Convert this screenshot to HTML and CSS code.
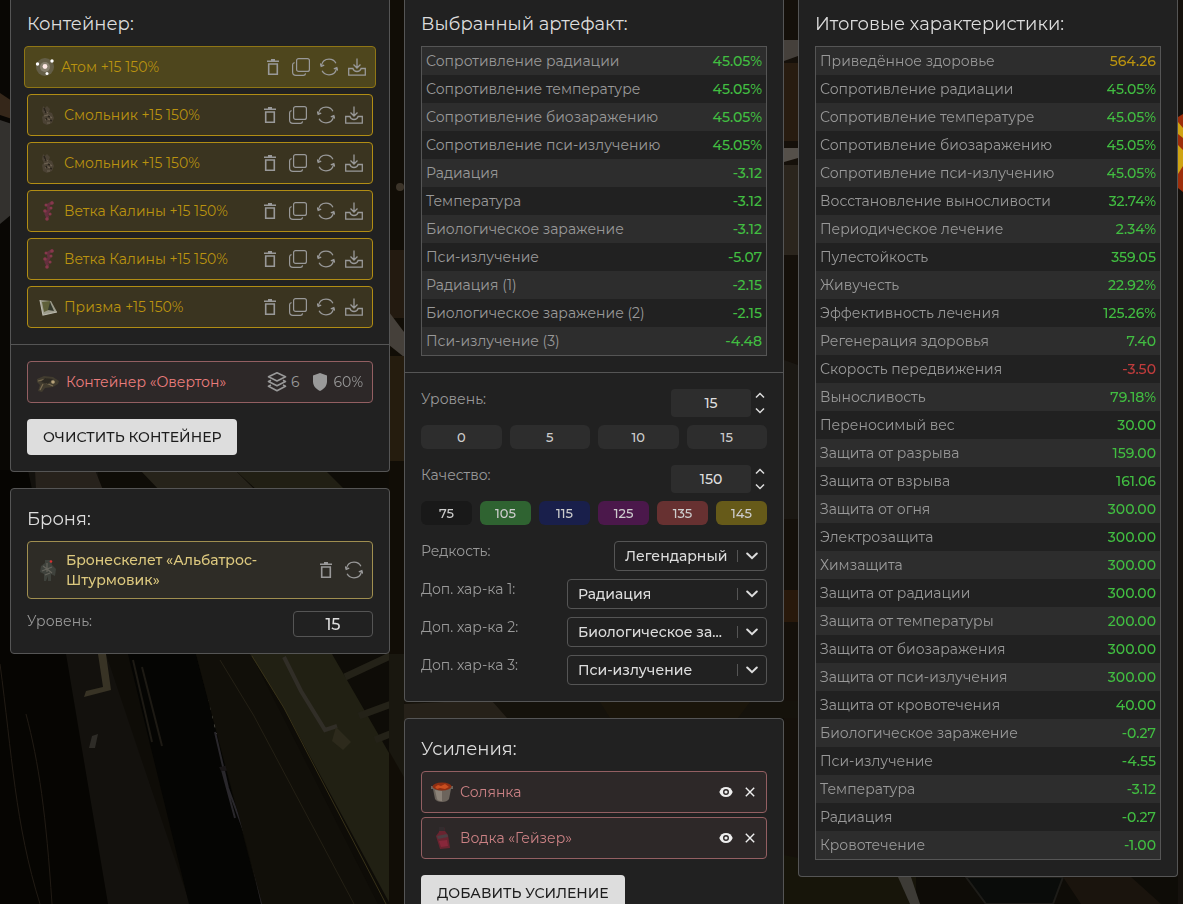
FILE: index.html
```html
<!DOCTYPE html>
<html lang="ru">
<head>
<meta charset="utf-8">
<meta name="viewport" content="width=device-width, initial-scale=1">
<title>Сборка артефактов</title>
<link rel="stylesheet" href="styles.css">
</head>
<body>
<svg class="defs" aria-hidden="true">
  <symbol id="trash" viewBox="0 0 18 18"><path d="M3 3.2h12M7 1.800h4M4.700 6v10.200h8.600V6z" fill="none" stroke="currentColor" stroke-width="1.600"/></symbol>
  <symbol id="copy" viewBox="0 0 18 18"><rect x="4.600" y=".6" width="12.800" height="12.800" rx="2" fill="none" stroke="currentColor" stroke-width="1.200"/><path d="M2.600 4.600C1.200 4.800.6 5.600.6 6.800V14c0 2.200 1.200 3.400 3.400 3.400h7.400c1.200 0 2-.6 2.200-2" fill="none" stroke="currentColor" stroke-width="1.200"/></symbol>
  <symbol id="refresh" viewBox="0 0 18 18"><path d="M1.400 7.600C2.200 3.800 5.200 1.200 9 1.200c3 0 5.600 1.500 6.900 4M16.600 10.400C15.800 14.200 12.800 16.800 9 16.800c-3 0-5.600-1.500-6.900-4" fill="none" stroke="currentColor" stroke-width="1.300"/><path d="M.3 5.400l.9 3 3-1.200M17.700 12.600l-.9-3-3 1.200" fill="none" stroke="currentColor" stroke-width="1.300"/></symbol>
  <symbol id="download" viewBox="0 0 18 18"><path d="M9 .5v9.300M5.500 6.500L9 10l3.500-3.500M.7 10.500h4.200c.6 1.900 2 3 4.100 3s3.500-1.100 4.100-3h4.200v6.700H.7z" fill="none" stroke="currentColor" stroke-width="1.300"/></symbol>
  <symbol id="layers" viewBox="0 0 20 20"><path d="M10 .8l8.500 4L10 9 1.500 4.800zM4 8.300L1.500 9.500 10 13.800l8.500-4.300L16 8.300M4 13l-2.500 1.300L10 18.800l8.500-4.500L16 13" fill="none" stroke="currentColor" stroke-width="1.600" stroke-linejoin="round"/></symbol>
  <symbol id="shield" viewBox="0 0 16 20"><path d="M8 1l7 2.500v6C15 14 12 17 8 19 4 17 1 14 1 9.500v-6z" fill="currentColor"/></symbol>
  <symbol id="eye" viewBox="0 0 14 12"><path d="M7 1C3.800 1 1.300 2.900.3 6c1 3.100 3.500 5 6.700 5s5.700-1.900 6.700-5C12.700 2.900 10.200 1 7 1z" fill="currentColor"/><circle cx="7" cy="6" r="2.300" fill="#eee" stroke="#2d2828" stroke-width="1.400"/></symbol>
  <symbol id="cross" viewBox="0 0 10 10"><path d="M.8.8l8.400 8.400M9.200.8L.8 9.200" fill="none" stroke="currentColor" stroke-width="1.400"/></symbol>
  <symbol id="up" viewBox="0 0 10 6"><path d="M1 5l4-4 4 4" fill="none" stroke="currentColor" stroke-width="1.500"/></symbol>
  <symbol id="down" viewBox="0 0 10 6"><path d="M1 1l4 4 4-4" fill="none" stroke="currentColor" stroke-width="1.500"/></symbol>
  <symbol id="arrow" viewBox="0 0 12 8"><path d="M1.200 1.500L6 6.200l4.800-4.700" fill="none" stroke="currentColor" stroke-width="2" stroke-linecap="round"/></symbol>
  <symbol id="atom" viewBox="0 0 24 24"><circle cx="12" cy="12" r="9" fill="#77736a" opacity=".55"/><circle cx="12" cy="12" r="5" fill="#a9a195" opacity=".5"/><circle cx="12" cy="11.500" r="2.400" fill="#ffe9e6"/><circle cx="4.500" cy="9" r="1.700" fill="#fff"/><circle cx="19" cy="6" r="1.700" fill="#fff"/><circle cx="14" cy="18.500" r="1.500" fill="#fff"/></symbol>
  <symbol id="resin" viewBox="0 0 24 24"><path d="M7 3l2 2 2-2 3 3-1 3 3 1 2 5-2 5-5 2-4-2-1-6 2-2-2-4z" fill="#4b4234"/><path d="M8 8l4 2M8 13l4-1 4 3M9 17l3-1 4 2M11 20h3" fill="none" stroke="#6d6252" stroke-width="1.200"/><path d="M8 5l2 5M12 13l2 1M10 15l1 2M14 17l2 1" stroke="#2a241c" stroke-width="1.500"/></symbol>
  <symbol id="branch" viewBox="0 0 24 24"><path d="M17 3l-5 3 1 5-3 4 2 4" fill="none" stroke="#642f3e" stroke-width="3"/><g fill="#87384c"><circle cx="16" cy="4" r="1.800"/><circle cx="10" cy="6" r="1.500"/><circle cx="15" cy="9" r="1.500"/><circle cx="9" cy="12" r="1.800"/><circle cx="14" cy="15" r="1.600"/><circle cx="11" cy="20" r="1.800"/></g></symbol>
  <symbol id="prism" viewBox="0 0 24 24"><path d="M4 5l11 1 6 11-14 3z" fill="#9c9b8b"/><path d="M6 7l8-1 1 8-7 3z" fill="#5f603a"/><path d="M12 15l2-8 4 9z" fill="#34382b"/><path d="M4 5l3 15 14-3" fill="none" stroke="#bab9ad" stroke-width="1.200"/></symbol>
  <symbol id="pouch" viewBox="0 0 24 24"><path d="M1 9l7-3 9 1 6 4-1 3-5 3-8 1-3 4-4-1 2-6-3-3z" fill="#423c2f"/><path d="M2 11l8-2 6 2M7 14l-3 6M10 13l7 3" stroke="#7b6d52" stroke-width="1.200" fill="none"/><path d="M9 8l8 1-5 5-7-2z" fill="#2d2922"/><circle cx="17" cy="12" r="1.800" fill="#b9a47c"/></symbol>
  <symbol id="armor" viewBox="0 0 24 24"><path d="M9 2h6l1 5 4 4-1 7-4-2v7h-3v-5l-2 5H8v-7l-4-2 1-6 4-3z" fill="#3f423c"/><path d="M7 8l4 3 5-2M6 13l5-2 5 4M9 17l5-2M11 5v9" stroke="#65645c" stroke-width="1.200" fill="none"/><circle cx="15" cy="3.500" r="1.300" fill="#d93131"/></symbol>
  <symbol id="pot" viewBox="0 0 24 24"><path d="M1 6h22v3h-2l-2 10c-2 4-12 4-14 0L3 9H1z" fill="#6c645c"/><path d="M5 10l2 9c1 2 3 2 5 2V11z" fill="#8b8278"/><ellipse cx="12" cy="6.500" rx="9.500" ry="4" fill="#8d2e12"/><path d="M5 7l3-2 3 1 4-2 4 3-4 2-5-1-3 1z" fill="#c94e1f"/></symbol>
  <symbol id="bottle" viewBox="0 0 24 24"><path d="M9 1h5l1 4 3 4 2 13-10 1L6 10l3-4z" fill="#6a2430"/><path d="M9 1h5l1 4H9z" fill="#332c2e"/><path d="M7 10l10-2 1 3-10 2z" fill="#4c3f43"/><path d="M9 15l8-1 1 6-7 1z" fill="#88273a"/></symbol>
</svg>

<svg class="backdrop" viewBox="0 0 1183 904" preserveAspectRatio="xMidYMid slice" aria-hidden="true">
  <rect width="1183" height="904" fill="#0e0c07"/>
  <path d="M0 0h12v904H0z" fill="#090704"/>
  <path d="M0 120l12 4v90l-12 10z" fill="#33312e"/><path d="M0 93l12 8v18l-12-4z" fill="#35271a"/>
  <path d="M28 470l42 184 42 250H0V470z" fill="#060502"/>
  <path d="M28 470h70l8 184 84 250h-82L66 654z" fill="#13110d"/>
  <path d="M35 470h60l8 20H36z" fill="#27221c"/><path d="M140 470h95l22 22h-96z" fill="#26231a"/><path d="M235 470h90l22 22h-88z" fill="#211f14"/>
  <path d="M98 654h8l5 36-27 7 2-6 17-4z" fill="#383325"/><path d="M92 736l6-2-3 14h-6z" fill="#2e2c27"/>
  <path d="M128 654h68l65 250h-72z" fill="#050503"/>
  <path d="M133 660l19 82M142 667l20 79" stroke="#1d1a14" stroke-width="2"/>
  <path d="M199 654l18 80" stroke="#4c4a42" stroke-width="2" stroke-dasharray="3 6"/>
  <path d="M215 732l13 56 20 54 14 62M222 770l13 48" stroke="#29272b" stroke-width="2" fill="none"/>
  <path d="M219 767c9 0 15-8 27-11l2 5c-9 4-14 11-27 10z" fill="#191617"/>
  <path d="M196 654h55l127 250H262z" fill="#110f09"/>
  <path d="M220 660l34 56 100 188" stroke="#242015" stroke-width="1" fill="none"/>
  <path d="M250 654h82l72 125v110l-14 15L284 708z" fill="#212013"/>
  <path d="M252 656l32 52 102 196" stroke="#383219" stroke-width="1" fill="none"/>
  <path d="M284 657l17 34 24 39 12-4" stroke="#312e27" stroke-width="4" fill="none"/><path d="M336 727l15 15-8 8-11-9z" fill="#2d2a1c"/>
  <path d="M345 677l60-28M359 716l46-17M375 740l30-12" stroke="#242218" stroke-width="7"/>
  <path d="M0 664c12 90 15 160 40 240M26 714c13 49 20 100 26 190" stroke="#211b14" stroke-width="1" fill="none"/>
  <path d="M389 0h18v904h-18z" fill="#110d06"/><path d="M389 250h16v68h-16z" fill="#231a10"/><path d="M389 312l15 20v25l-15-12z" fill="#45403a"/><circle cx="400" cy="187" r="4" fill="#3c3429"/><path d="M389 356h16v105h-16z" fill="#251c0e"/><path d="M389 654h16v125l-16-28z" fill="#19170f"/>
  <path d="M784 0h14v904h-14z" fill="#15100a"/><path d="M784 40h14v16l-14 5z" fill="#45403b"/><path d="M784 63h14v78h-14z" fill="#281c10"/><path d="M784 148h14v10l-14 4z" fill="#55504a"/><path d="M784 165h14v90h-14z" fill="#2b251d"/><path d="M784 360l14 5v154h-14z" fill="#1b1813"/><path d="M784 590h14v32h-14z" fill="#29190b"/>
  <path d="M404 701h394v17H404z" fill="#15120b"/><path d="M404 704l60-3h28l15 17h-70l-33 9z" fill="#262119"/><path d="M600 702h150l-12 16H610z" fill="#1a150a"/>
  <path d="M784 855l70 14 62 7v28H784z" fill="#17150a"/><path d="M898 877l12 27h10l-9-27z" fill="#3d3b36"/><path d="M966 877h97l-10 27h-67z" fill="#0a0c0a" stroke="#1d1c18" stroke-width="2"/><path d="M1063 877h68l30 27h-80z" fill="#1a140d"/>
  <path d="M1178 0h5v904h-5z" fill="#15110d"/><path d="M1178 117l5-3v78l-5-4z" fill="#9e2e0a"/><path d="M1178 122l5 6v10l-5-4zM1178 145l5 5v16l-5 8z" fill="#d0a413"/>
</svg>

<main class="page">
  <div class="column">
    <section class="panel panel-first">
      <h2>Контейнер:</h2>
      <ul class="list">
        <li class="item gold active"><svg class="pic"><use href="#atom"/></svg><span class="name">Атом +15 150%</span><span class="tools"><button aria-label="Удалить"><svg><use href="#trash"/></svg></button><button aria-label="Копировать"><svg><use href="#copy"/></svg></button><button aria-label="Заменить"><svg><use href="#refresh"/></svg></button><button aria-label="Сохранить"><svg><use href="#download"/></svg></button></span></li>
        <li class="item gold"><svg class="pic"><use href="#resin"/></svg><span class="name">Смольник +15 150%</span><span class="tools"><button aria-label="Удалить"><svg><use href="#trash"/></svg></button><button aria-label="Копировать"><svg><use href="#copy"/></svg></button><button aria-label="Заменить"><svg><use href="#refresh"/></svg></button><button aria-label="Сохранить"><svg><use href="#download"/></svg></button></span></li>
        <li class="item gold"><svg class="pic"><use href="#resin"/></svg><span class="name">Смольник +15 150%</span><span class="tools"><button aria-label="Удалить"><svg><use href="#trash"/></svg></button><button aria-label="Копировать"><svg><use href="#copy"/></svg></button><button aria-label="Заменить"><svg><use href="#refresh"/></svg></button><button aria-label="Сохранить"><svg><use href="#download"/></svg></button></span></li>
        <li class="item gold"><svg class="pic"><use href="#branch"/></svg><span class="name">Ветка Калины +15 150%</span><span class="tools"><button aria-label="Удалить"><svg><use href="#trash"/></svg></button><button aria-label="Копировать"><svg><use href="#copy"/></svg></button><button aria-label="Заменить"><svg><use href="#refresh"/></svg></button><button aria-label="Сохранить"><svg><use href="#download"/></svg></button></span></li>
        <li class="item gold"><svg class="pic"><use href="#branch"/></svg><span class="name">Ветка Калины +15 150%</span><span class="tools"><button aria-label="Удалить"><svg><use href="#trash"/></svg></button><button aria-label="Копировать"><svg><use href="#copy"/></svg></button><button aria-label="Заменить"><svg><use href="#refresh"/></svg></button><button aria-label="Сохранить"><svg><use href="#download"/></svg></button></span></li>
        <li class="item gold"><svg class="pic"><use href="#prism"/></svg><span class="name">Призма +15 150%</span><span class="tools"><button aria-label="Удалить"><svg><use href="#trash"/></svg></button><button aria-label="Копировать"><svg><use href="#copy"/></svg></button><button aria-label="Заменить"><svg><use href="#refresh"/></svg></button><button aria-label="Сохранить"><svg><use href="#download"/></svg></button></span></li>
      </ul>
      <hr>
      <div class="item red bright"><svg class="pic"><use href="#pouch"/></svg><span class="name">Контейнер «Овертон»</span><span class="stats"><svg class="layers"><use href="#layers"/></svg><span>6</span><svg class="shield"><use href="#shield"/></svg><span>60%</span></span></div>
      <button class="primary">ОЧИСТИТЬ КОНТЕЙНЕР</button>
    </section>

    <section class="panel">
      <h2>Броня:</h2>
      <div class="item sand"><svg class="pic"><use href="#armor"/></svg><span class="name">Бронескелет «Альбатрос-Штурмовик»</span><span class="tools"><button aria-label="Удалить"><svg><use href="#trash"/></svg></button><button aria-label="Заменить"><svg><use href="#refresh"/></svg></button></span></div>
      <div class="field armor-level"><label for="armor-level">Уровень:</label><input id="armor-level" class="outlined" value="15"></div>
    </section>
  </div>

  <div class="column">
    <section class="panel panel-first">
      <h2>Выбранный артефакт:</h2>
      <table>
        <tr><th scope="row">Сопротивление радиации</th><td>45.05%</td></tr>
        <tr><th scope="row">Сопротивление температуре</th><td>45.05%</td></tr>
        <tr><th scope="row">Сопротивление биозаражению</th><td>45.05%</td></tr>
        <tr><th scope="row">Сопротивление пси-излучению</th><td>45.05%</td></tr>
        <tr><th scope="row">Радиация</th><td>-3.12</td></tr>
        <tr><th scope="row">Температура</th><td>-3.12</td></tr>
        <tr><th scope="row">Биологическое заражение</th><td>-3.12</td></tr>
        <tr><th scope="row">Пси-излучение</th><td>-5.07</td></tr>
        <tr><th scope="row">Радиация (1)</th><td>-2.15</td></tr>
        <tr><th scope="row">Биологическое заражение (2)</th><td>-2.15</td></tr>
        <tr><th scope="row">Пси-излучение (3)</th><td>-4.48</td></tr>
      </table>
      <hr>
      <div class="field"><label for="level">Уровень:</label><div class="stepper"><input id="level" value="15"><div class="arrows"><button aria-label="Повысить уровень"><svg><use href="#up"/></svg></button><button aria-label="Понизить уровень"><svg><use href="#down"/></svg></button></div></div></div>
      <div class="presets"><button>0</button><button>5</button><button>10</button><button>15</button></div>
      <div class="field"><label for="quality">Качество:</label><div class="stepper"><input id="quality" value="150"><div class="arrows"><button aria-label="Повысить качество"><svg><use href="#up"/></svg></button><button aria-label="Понизить качество"><svg><use href="#down"/></svg></button></div></div></div>
      <div class="presets"><button class="q75">75</button><button class="q105">105</button><button class="q115">115</button><button class="q125">125</button><button class="q135">135</button><button class="q145">145</button></div>
      <div class="selects">
        <div class="field"><label for="rarity">Редкость:</label><div class="select rarity"><select id="rarity"><option>Легендарный</option></select><svg><use href="#arrow"/></svg></div></div>
        <div class="field"><label for="extra1">Доп. хар-ка 1:</label><div class="select"><select id="extra1"><option>Радиация</option></select><svg><use href="#arrow"/></svg></div></div>
        <div class="field"><label for="extra2">Доп. хар-ка 2:</label><div class="select"><select id="extra2"><option>Биологическое заражение</option></select><svg><use href="#arrow"/></svg></div></div>
        <div class="field"><label for="extra3">Доп. хар-ка 3:</label><div class="select"><select id="extra3"><option>Пси-излучение</option></select><svg><use href="#arrow"/></svg></div></div>
      </div>
    </section>

    <section class="panel">
      <h2>Усиления:</h2>
      <ul class="list boosts">
        <li class="item red"><svg class="pic"><use href="#pot"/></svg><span class="name">Солянка</span><span class="boost-tools"><button aria-label="Показать"><svg class="eye"><use href="#eye"/></svg></button><button aria-label="Убрать"><svg class="cross"><use href="#cross"/></svg></button></span></li>
        <li class="item red"><svg class="pic"><use href="#bottle"/></svg><span class="name">Водка «Гейзер»</span><span class="boost-tools"><button aria-label="Показать"><svg class="eye"><use href="#eye"/></svg></button><button aria-label="Убрать"><svg class="cross"><use href="#cross"/></svg></button></span></li>
      </ul>
      <button class="primary">ДОБАВИТЬ УСИЛЕНИЕ</button>
    </section>
  </div>

  <div class="column">
    <section class="panel panel-first">
      <h2>Итоговые характеристики:</h2>
      <table>
        <tr><th scope="row">Приведённое здоровье</th><td class="total">564.26</td></tr>
        <tr><th scope="row">Сопротивление радиации</th><td>45.05%</td></tr>
        <tr><th scope="row">Сопротивление температуре</th><td>45.05%</td></tr>
        <tr><th scope="row">Сопротивление биозаражению</th><td>45.05%</td></tr>
        <tr><th scope="row">Сопротивление пси-излучению</th><td>45.05%</td></tr>
        <tr><th scope="row">Восстановление выносливости</th><td>32.74%</td></tr>
        <tr><th scope="row">Периодическое лечение</th><td>2.34%</td></tr>
        <tr><th scope="row">Пулестойкость</th><td>359.05</td></tr>
        <tr><th scope="row">Живучесть</th><td>22.92%</td></tr>
        <tr><th scope="row">Эффективность лечения</th><td>125.26%</td></tr>
        <tr><th scope="row">Регенерация здоровья</th><td>7.40</td></tr>
        <tr><th scope="row">Скорость передвижения</th><td class="bad">-3.50</td></tr>
        <tr><th scope="row">Выносливость</th><td>79.18%</td></tr>
        <tr><th scope="row">Переносимый вес</th><td>30.00</td></tr>
        <tr><th scope="row">Защита от разрыва</th><td>159.00</td></tr>
        <tr><th scope="row">Защита от взрыва</th><td>161.06</td></tr>
        <tr><th scope="row">Защита от огня</th><td>300.00</td></tr>
        <tr><th scope="row">Электрозащита</th><td>300.00</td></tr>
        <tr><th scope="row">Химзащита</th><td>300.00</td></tr>
        <tr><th scope="row">Защита от радиации</th><td>300.00</td></tr>
        <tr><th scope="row">Защита от температуры</th><td>200.00</td></tr>
        <tr><th scope="row">Защита от биозаражения</th><td>300.00</td></tr>
        <tr><th scope="row">Защита от пси-излучения</th><td>300.00</td></tr>
        <tr><th scope="row">Защита от кровотечения</th><td>40.00</td></tr>
        <tr><th scope="row">Биологическое заражение</th><td>-0.27</td></tr>
        <tr><th scope="row">Пси-излучение</th><td>-4.55</td></tr>
        <tr><th scope="row">Температура</th><td>-3.12</td></tr>
        <tr><th scope="row">Радиация</th><td>-0.27</td></tr>
        <tr><th scope="row">Кровотечение</th><td>-1.00</td></tr>
      </table>
    </section>
  </div>
</main>
</body>
</html>
```
FILE: styles.css
```css
* { box-sizing: border-box; }

body {
  margin: 0;
  background: #0e0c07;
  color: #999;
  font: 400 14px/20px Montserrat, Inter, "Open Sans", sans-serif;
}

button, input, select { font: inherit; color: inherit; margin: 0; }
button { padding: 0; border: 0; background: none; cursor: pointer; }
svg { display: block; flex: none; }
.defs { position: absolute; width: 0; height: 0; }

.backdrop {
  position: fixed;
  inset: 0;
  z-index: -1;
  width: 100%;
  height: 100%;
}

.page {
  display: grid;
  grid-template-columns: repeat(3, minmax(0, 1fr));
  align-items: start;
  gap: 14px;
  height: 100vh;
  padding: 0 5px 0 10px;
  overflow-y: auto;
  scrollbar-width: none;
}

.column { display: grid; gap: 16px; }

.panel {
  padding: 16px;
  border: 1px solid #555;
  border-radius: 4px;
  background: #212121;
}

.panel-first {
  padding-top: 10px;
  border-top: 0;
  border-radius: 0 0 4px 4px;
}

h2 {
  margin: 0 0 8px;
  color: #ddd;
  font-size: 18px;
  font-weight: 400;
  line-height: 28px;
}

hr {
  height: 1px;
  margin: 16px -16px;
  border: 0;
  background: #555;
}

.list {
  display: grid;
  gap: 6px;
  margin: 0;
  padding: 0;
  list-style: none;
}

.boosts { gap: 4px; }

.item {
  display: flex;
  align-items: center;
  gap: 6px;
  min-height: 42px;
  padding: 8px 9px 8px 8px;
  border: 1px solid;
  border-radius: 4px;
}

.gold { gap: 4px; border-color: #b18d14; background: #3a3420; color: #ba930f; }
.active { margin: 0 -3px; border-color: #8f7615; background: #4e461d; }
.red { border-color: #935f62; background: #2d2828; color: #cb8184; }
.bright { color: #eb7d7d; }
.sand { border-color: #a08f50; background: #2e2c26; color: #dcc87e; font-weight: 500; }

.pic { width: 24px; height: 24px; }
.name { flex: 1; min-width: 0; }

.tools { display: flex; gap: 10px; color: #999; }
.tools svg { width: 18px; height: 18px; }

.stats { display: flex; align-items: center; gap: 4px; color: #999; }
.layers { width: 20px; height: 20px; }
.shield { width: 16px; height: 20px; margin: 0 2px 0 8px; }

.boost-tools { display: flex; align-items: center; gap: 12px; padding-right: 2px; color: #eee; }
.eye { width: 14px; height: 12px; }
.cross { width: 10px; height: 10px; }

.primary {
  display: block;
  height: 36px;
  margin-top: 16px;
  padding: 0 16px;
  border-radius: 4px;
  background: #ddd;
  color: #1c1c1c;
  font-weight: 500;
}

table {
  width: 100%;
  border: 1px solid #555;
  border-spacing: 0;
}

tr:nth-child(odd) { background: #2d2d2d; }
th, td { height: 28px; padding: 0 4px; font-weight: 400; white-space: nowrap; }
th { text-align: left; }
td { color: #41bd41; font-weight: 500; text-align: right; }
.total { color: #ba930f; }
.bad { color: #c03c3c; }

.field { display: flex; justify-content: space-between; align-items: flex-start; }
.armor-level { margin-top: 12px; }

input {
  width: 80px;
  height: 28px;
  padding: 0;
  border: 0;
  border-radius: 4px;
  background: #2d2d2d;
  color: #ddd;
  font-weight: 500;
  text-align: center;
}

.outlined { height: 26px; border: 1px solid #555; background: #212121; font-size: 16px; }

.stepper { display: flex; gap: 4px; }
.arrows { display: grid; align-content: space-between; padding: 3px 2px 3px 0; }
.arrows svg { width: 10px; height: 7px; color: #ddd; }

.presets {
  display: grid;
  grid-auto-columns: 1fr;
  grid-auto-flow: column;
  gap: 8px;
  margin: 8px 0 16px;
}

.presets button {
  height: 24px;
  border-radius: 6px;
  background: #2d2d2d;
  color: #ccc;
  font-size: 13px;
  font-weight: 500;
}

.presets .q75 { background: #191919; }
.presets .q105 { background: #2f6331; }
.presets .q115 { background: #191f4b; }
.presets .q125 { background: #4b184b; }
.presets .q135 { background: #673131; }
.presets .q145 { background: #665a19; }

.selects { display: grid; gap: 8px; }
.select { position: relative; width: 200px; }
.rarity { width: 153px; }

select {
  display: block;
  width: 100%;
  height: 30px;
  padding: 0 44px 0 10px;
  border: 1px solid #555;
  border-radius: 4px;
  background: #212121;
  color: #ddd;
  font-weight: 500;
  text-overflow: ellipsis;
  appearance: none;
}

.rarity select { padding-right: 32px; }

.select::after {
  content: "";
  position: absolute;
  top: 9px;
  right: 29px;
  width: 1px;
  height: 12px;
  background: #555;
}

.select svg {
  position: absolute;
  top: 11px;
  right: 9px;
  width: 12px;
  height: 8px;
  color: #ddd;
  pointer-events: none;
}
```
